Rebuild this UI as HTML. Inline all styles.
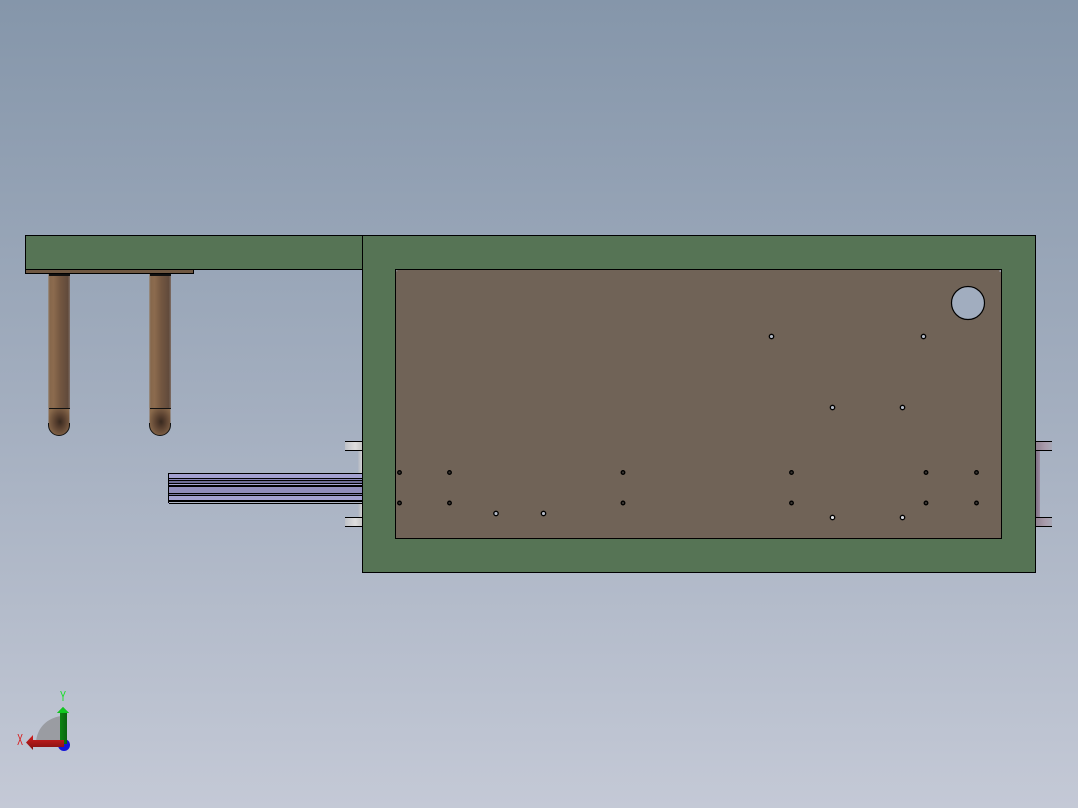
<!DOCTYPE html>
<html>
<head>
<meta charset="utf-8">
<style>
html,body{margin:0;padding:0;width:1078px;height:808px;overflow:hidden;background:#a0acbe}
svg{display:block;position:absolute;left:0;top:0}
</style>
</head>
<body>
<svg width="1078" height="808" viewBox="0 0 1078 808" xmlns="http://www.w3.org/2000/svg">
<defs>
<linearGradient id="bg" x1="0" y1="0" x2="0" y2="1">
<stop offset="0" stop-color="#8596aa"/>
<stop offset="0.5" stop-color="#a3aebf"/>
<stop offset="1" stop-color="#c4c9d6"/>
</linearGradient>
<linearGradient id="leg" x1="0" y1="0" x2="1" y2="0">
<stop offset="0" stop-color="#9a948e"/>
<stop offset="0.08" stop-color="#86674c"/>
<stop offset="0.25" stop-color="#8c6b4e"/>
<stop offset="0.55" stop-color="#745741"/>
<stop offset="0.9" stop-color="#614a3b"/>
<stop offset="1" stop-color="#7f6f68"/>
</linearGradient>
<radialGradient id="ball" cx="0.55" cy="0.5" r="0.6">
<stop offset="0" stop-color="#38291f"/>
<stop offset="0.4" stop-color="#5a4130"/>
<stop offset="1" stop-color="#8a6a4c"/>
</radialGradient>
<linearGradient id="tabL" x1="0" y1="0" x2="1" y2="0">
<stop offset="0" stop-color="#bfc2c8"/>
<stop offset="0.6" stop-color="#dedede"/>
<stop offset="1" stop-color="#c8c8c8"/>
</linearGradient>
<linearGradient id="tabR" x1="0" y1="0" x2="1" y2="0">
<stop offset="0" stop-color="#8f8090"/>
<stop offset="0.6" stop-color="#a99cab"/>
<stop offset="1" stop-color="#a8a8b6"/>
</linearGradient>
<linearGradient id="stripL" x1="0" y1="0" x2="1" y2="0">
<stop offset="0" stop-color="#adb4c2"/>
<stop offset="1" stop-color="#d2d2d2"/>
</linearGradient>
<linearGradient id="stripR" x1="0" y1="0" x2="1" y2="0">
<stop offset="0" stop-color="#7f7085"/>
<stop offset="1" stop-color="#9a8da0"/>
</linearGradient>
<linearGradient id="red" x1="0" y1="0" x2="0" y2="1">
<stop offset="0" stop-color="#d82020"/>
<stop offset="1" stop-color="#7c1010"/>
</linearGradient>
<linearGradient id="green" x1="0" y1="0" x2="1" y2="0">
<stop offset="0" stop-color="#0c9412"/>
<stop offset="1" stop-color="#0a5a10"/>
</linearGradient>
</defs>

<rect width="1078" height="808" fill="url(#bg)"/>

<!-- legs -->
<g>
<rect x="48" y="274" width="22" height="134" fill="url(#leg)"/>
<path d="M48.500 408H69.500V424.500A10.500 11 0 0 1 48.500 424.500Z" fill="url(#ball)"/>
<path d="M48.500 423V425A10.500 10.500 0 0 0 69.500 425V423" fill="none" stroke="#111" stroke-width="1"/>
<path d="M49 274.500H70M49 275.500H70M49 408.500H70" stroke="#111" stroke-width="1" shape-rendering="crispEdges"/>
<rect x="149" y="274" width="22" height="134" fill="url(#leg)"/>
<path d="M149.500 408H170.500V424.500A10.500 11 0 0 1 149.500 424.500Z" fill="url(#ball)"/>
<path d="M149.500 423V425A10.500 10.500 0 0 0 170.500 425V423" fill="none" stroke="#111" stroke-width="1"/>
<path d="M150 274.500H171M150 275.500H171M150 408.500H171" stroke="#111" stroke-width="1" shape-rendering="crispEdges"/>
</g>

<g shape-rendering="crispEdges">
<!-- left green beam -->
<rect x="25.500" y="235.500" width="337" height="34" fill="#567455" stroke="#000"/>
<rect x="25.500" y="269.500" width="168" height="4" fill="#6f5842" stroke="#000"/>

<!-- left pale strip and tabs -->
<rect x="358" y="451" width="4" height="66" fill="url(#stripL)"/>
<rect x="345" y="441" width="17" height="10" fill="url(#tabL)"/>
<path d="M345 441.500H362M345 450.500H362" stroke="#000"/>
<rect x="345" y="517" width="17" height="10" fill="url(#tabL)"/>
<path d="M345 517.500H362M345 526.500H362" stroke="#000"/>

<!-- blue bar -->
<rect x="168" y="473" width="194" height="31" fill="#a3a1d1"/>
<rect x="169" y="479" width="193" height="1" fill="#8b89b6"/>
<rect x="169" y="481" width="193" height="2" fill="#6e6c96"/>
<rect x="169" y="487" width="193" height="6" fill="#908dbb"/>
<rect x="169" y="494" width="193" height="1" fill="#70709a"/>
<rect x="169" y="502" width="193" height="1" fill="#aeb4c4"/>
<path d="M168 473.500H362M168 478.500H362M168 480.500H362M168 483.500H362M168 485.500H362M168 486.500H362M168 493.500H362M168 495.500H362M168 500.500H362M168 501.500H362M169 503.500H362" stroke="#000" fill="none"/>
<path d="M168.500 473V503" stroke="#000"/>

<!-- right strip and tabs -->
<rect x="1036" y="451" width="4" height="66" fill="url(#stripR)"/>
<rect x="1035" y="441" width="17" height="10" fill="url(#tabR)"/>
<path d="M1035 441.500H1052M1035 450.500H1052" stroke="#000"/>
<rect x="1035" y="517" width="17" height="10" fill="url(#tabR)"/>
<path d="M1035 517.500H1052M1035 526.500H1052" stroke="#000"/>

<!-- main plate -->
<rect x="362.500" y="235.500" width="673" height="337" fill="#567455" stroke="#000"/>
<rect x="395.500" y="269.500" width="606" height="269" fill="#706357" stroke="#000"/>
</g>

<!-- large circle -->
<circle cx="968" cy="303" r="16.500" fill="#a1adbf" stroke="#000" stroke-width="1.200"/>
<circle cx="1000.200" cy="271" r="0.900" fill="#a1adbf"/>
<circle cx="396.800" cy="270.800" r="0.600" fill="#a1adbf"/>

<!-- light holes -->
<g fill="#b5bcc9" stroke="#000" stroke-width="1.300">
<circle cx="771.500" cy="336.500" r="2.200"/>
<circle cx="923.500" cy="336.500" r="2.200"/>
<circle cx="832.500" cy="407.500" r="2.200"/>
<circle cx="902.500" cy="407.500" r="2.200"/>
<circle cx="496" cy="513.500" r="2.200"/>
<circle cx="543.500" cy="513.500" r="2.200"/>
<circle cx="832.500" cy="517.500" r="2.200" fill="#e4e6ea"/>
<circle cx="902.500" cy="517.500" r="2.200" fill="#d4d7de"/>
</g>

<!-- dark holes -->
<g fill="#3a3632" stroke="#000" stroke-width="1.300">
<circle cx="399.500" cy="472.500" r="1.800"/>
<circle cx="449.500" cy="472.500" r="1.800"/>
<circle cx="623" cy="472.500" r="1.800"/>
<circle cx="791.500" cy="472.500" r="1.800"/>
<circle cx="926" cy="472.500" r="1.800"/>
<circle cx="976.500" cy="472.500" r="1.800"/>
<circle cx="399.500" cy="503" r="1.800"/>
<circle cx="449.500" cy="503" r="1.800"/>
<circle cx="623" cy="503" r="1.800"/>
<circle cx="791.500" cy="503" r="1.800"/>
<circle cx="926" cy="503" r="1.800"/>
<circle cx="976.500" cy="503" r="1.800"/>
</g>

<!-- triad -->
<g>
<path d="M36 742C37 728 47 718 61 716V742Z" fill="#9a9ca2"/>
<circle cx="64" cy="745" r="6" fill="#1414d8"/>
<path d="M60 740V713H57L63 707L69 713H67V744H60Z" fill="url(#green)"/>
<path d="M57 713L63 707L69 713Z" fill="#10c820"/>
<path d="M64 740H33V735L26 742.500L33 750V747H64Z" fill="url(#red)"/>
<text transform="translate(63 701) scale(.6 1)" font-family="'Liberation Sans',sans-serif" font-size="15" fill="#10e020" text-anchor="middle">Y</text>
<text transform="translate(20 745) scale(.55 1)" font-family="'Liberation Sans',sans-serif" font-size="16" fill="#d81818" text-anchor="middle">X</text>
</g>
</svg>
</body>
</html>
